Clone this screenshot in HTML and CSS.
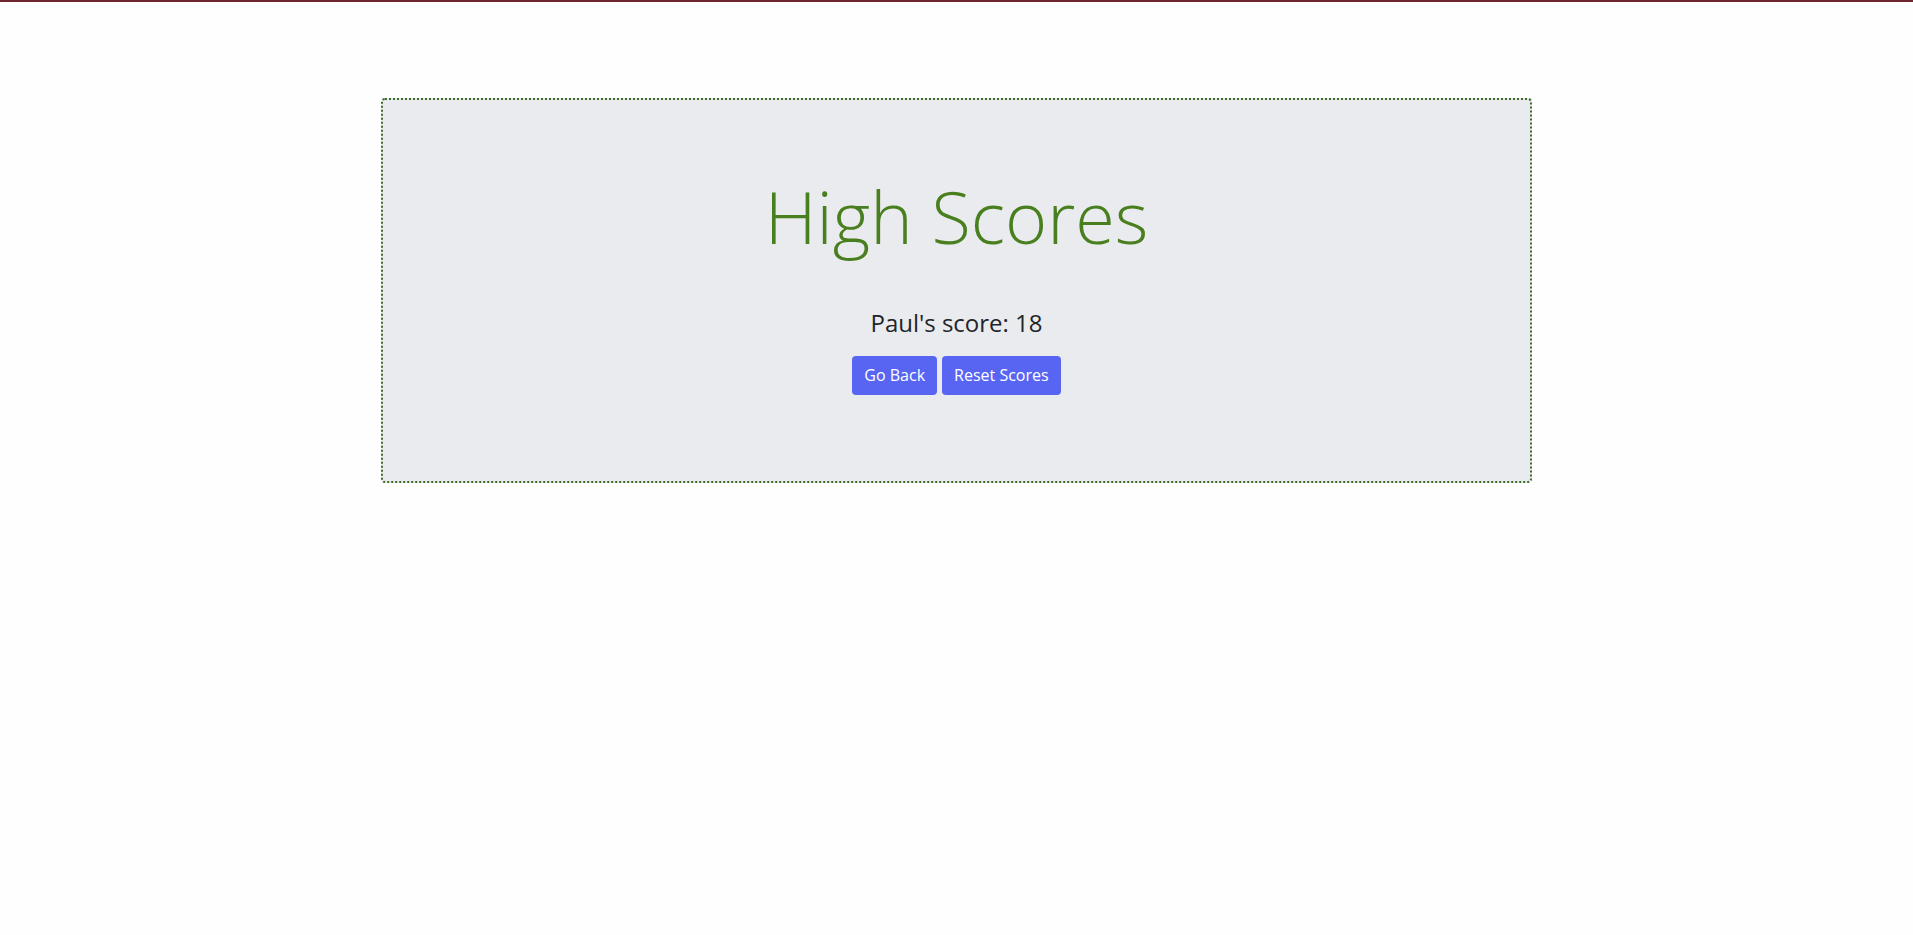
FILE: index.html
```html
<!DOCTYPE html>
<html lang="en">
<head>
<meta charset="utf-8">
<title>High Scores</title>
<link rel="stylesheet" href="styles.css">
</head>
<body>
<div class="topbar"></div>
<main class="page">
  <section class="panel">
    <h1 class="title">High Scores</h1>
    <p class="score">Paul's score: 18</p>
    <div class="actions">
      <button class="btn">Go Back</button>
      <button class="btn">Reset Scores</button>
    </div>
  </section>
</main>
</body>
</html>
```
FILE: styles.css
```css
html, body {
  margin: 0;
  padding: 0;
  background: #fefefe;
  font-family: "Open Sans", "Noto Sans", sans-serif;
  color: #212529;
}
.topbar {
  height: 2px;
  background: #6b2630;
}
.page {
  padding-top: 96px;
}
.panel {
  box-sizing: border-box;
  width: 1151px;
  height: 385px;
  margin: 0 auto;
  background: #e9ebee;
  border: 2px dotted #3f6b27;
  border-radius: 4px;
  text-align: center;
  padding-top: 73px;
}
.title {
  margin: 0;
  font-weight: 300;
  font-size: 72px;
  line-height: 1.2;
  color: #4a7f1f;
}
.score {
  margin: 50px 0 0;
  font-size: 24px;
  line-height: 1.2;
}
.actions {
  margin-top: 18px;
  display: flex;
  justify-content: center;
  gap: 5px;
}
.btn {
  font-family: "Open Sans", "Noto Sans", sans-serif;
  font-size: 16px;
  line-height: 24px;
  padding: 7px 12px 8px;
  border: 0;
  border-radius: 4px;
  background: #5865f2;
  color: #fff;
}
```
